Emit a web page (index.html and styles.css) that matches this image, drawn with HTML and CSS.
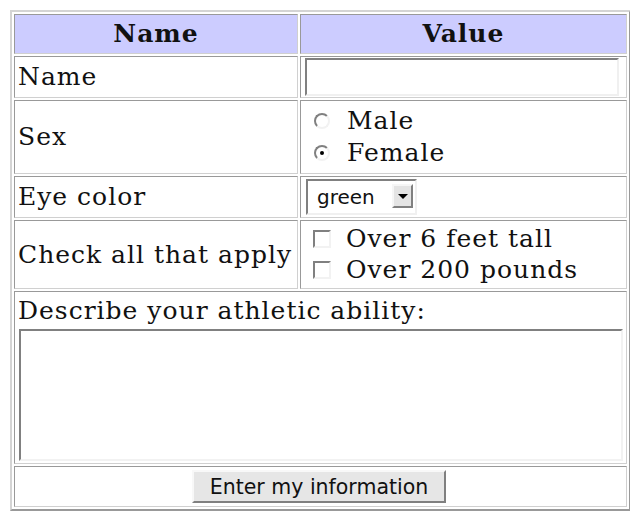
FILE: index.html
```html
<!DOCTYPE html>
<html lang="en">
<head>
    <title>Tell us about yourself</title>
    <link rel="stylesheet" href="styles.css">
</head>
<body>
    <form>
        <table class="info">
            <tr>
                <th class="label-col">Name</th>
                <th>Value</th>
            </tr>
            <tr class="row-name">
                <td>Name</td>
                <td><input type="text" class="text-input" name="name"></td>
            </tr>
            <tr class="row-sex">
                <td>Sex</td>
                <td>
                    <label class="choice"><input type="radio" class="radio" name="sex" value="m"> Male</label>
                    <label class="choice"><input type="radio" class="radio" name="sex" value="f" checked> Female</label>
                </td>
            </tr>
            <tr class="row-eyes">
                <td>Eye color</td>
                <td>
                    <span class="select-wrap">
                        <select class="select" name="eyes">
                            <option>green</option>
                            <option>blue</option>
                            <option>brown</option>
                        </select>
                        <span class="select-arrow"></span>
                    </span>
                </td>
            </tr>
            <tr class="row-check">
                <td>Check all that apply</td>
                <td>
                    <label class="choice tight"><input type="checkbox" class="check" name="tall"> Over 6 feet tall</label>
                    <label class="choice tight"><input type="checkbox" class="check" name="heavy"> Over 200 pounds</label>
                </td>
            </tr>
            <tr class="row-describe">
                <td colspan="2">
                    Describe your athletic ability:<br>
                    <textarea class="area" name="athletic"></textarea>
                </td>
            </tr>
            <tr class="row-submit">
                <td colspan="2" class="center">
                    <button type="button" class="submit">Enter my information</button>
                </td>
            </tr>
        </table>
    </form>
</body>
</html>
```

FILE: styles.css
```css
body {
    margin: 10px;
    background: #ffffff;
    font-family: "DejaVu Serif", serif;
    font-size: 25px;
    letter-spacing: 1px;
    color: #111111;
}

form {
    margin: 0;
}

.info {
    width: 620px;
    border-collapse: separate;
    border-spacing: 2px;
    border: 2px solid;
    border-color: #d4d4d4 #999999 #999999 #d4d4d4;
}

th, td {
    border: 1px solid;
    border-color: #999999 #d0d0d0 #d0d0d0 #999999;
    padding: 0 3px;
    text-align: left;
    vertical-align: middle;
    line-height: 30px;
}

th {
    background-color: #ccccff;
    text-align: center;
    font-weight: bold;
    height: 38px;
    padding: 0;
}

.label-col {
    width: 282px;
}

.row-name td { height: 40px; }
.row-sex td { height: 72px; }
.row-eyes td { height: 40px; }
.row-check td { height: 67px; }
.row-describe td { height: 168px; padding-top: 3px; }
.row-submit td { height: 39px; }

.center {
    text-align: center;
}

.text-input {
    display: block;
    box-sizing: border-box;
    width: 314px;
    height: 38px;
    margin: 0 0 0 1px;
    border: 2px solid;
    border-color: #808080 #f0f0f0 #f0f0f0 #808080;
    background: #ffffff;
}

.choice {
    display: flex;
    align-items: center;
    height: 32px;
    line-height: 32px;
}

.choice.tight {
    height: 31px;
}

.radio {
    appearance: none;
    width: 16px;
    height: 16px;
    margin: 0 17px 0 10px;
    border-radius: 50%;
    border: 2px solid;
    border-color: #808080 #f2f2f2 #f2f2f2 #808080;
    background: #ffffff;
    position: relative;
}

.radio:checked::after {
    content: "";
    position: absolute;
    left: 4px;
    top: 4px;
    width: 4px;
    height: 4px;
    border-radius: 50%;
    background: #000000;
}

.check {
    appearance: none;
    width: 18px;
    height: 18px;
    margin: 0 15px 0 9px;
    border: 2px solid;
    border-color: #808080 #f2f2f2 #f2f2f2 #808080;
    background: #ffffff;
}

.select-wrap {
    position: relative;
    display: inline-block;
    vertical-align: middle;
}

.select {
    appearance: none;
    display: block;
    box-sizing: border-box;
    width: 111px;
    height: 36px;
    margin-left: 2px;
    padding: 0 0 0 9px;
    font-family: "DejaVu Sans", sans-serif;
    font-size: 20px;
    letter-spacing: 0;
    color: #111111;
    border: 2px solid;
    border-color: #808080 #f0f0f0 #f0f0f0 #808080;
    border-radius: 0;
    background: #ffffff;
}

.select-arrow {
    position: absolute;
    right: 4px;
    top: 5px;
    box-sizing: border-box;
    width: 21px;
    height: 24px;
    background: #e4e4e4;
    border: 2px solid;
    border-color: #f6f6f6 #808080 #808080 #f6f6f6;
}

.select-arrow::after {
    content: "";
    position: absolute;
    left: 4px;
    top: 8px;
    border-left: 5px solid transparent;
    border-right: 5px solid transparent;
    border-top: 5px solid #000000;
}

.area {
    display: block;
    box-sizing: border-box;
    width: 604px;
    height: 132px;
    margin: 3px 0 1px 1px;
    border: 2px solid;
    border-color: #808080 #f2f2f2 #f2f2f2 #808080;
    resize: none;
}

.submit {
    box-sizing: border-box;
    width: 254px;
    height: 33px;
    margin-left: -3px;
    padding: 0;
    font-family: "DejaVu Sans", sans-serif;
    font-size: 20.5px;
    letter-spacing: 0;
    color: #111111;
    background: #e6e6e6;
    border: 2px solid;
    border-color: #f8f8f8 #808080 #808080 #f8f8f8;
    border-radius: 0;
    vertical-align: middle;
}
```
